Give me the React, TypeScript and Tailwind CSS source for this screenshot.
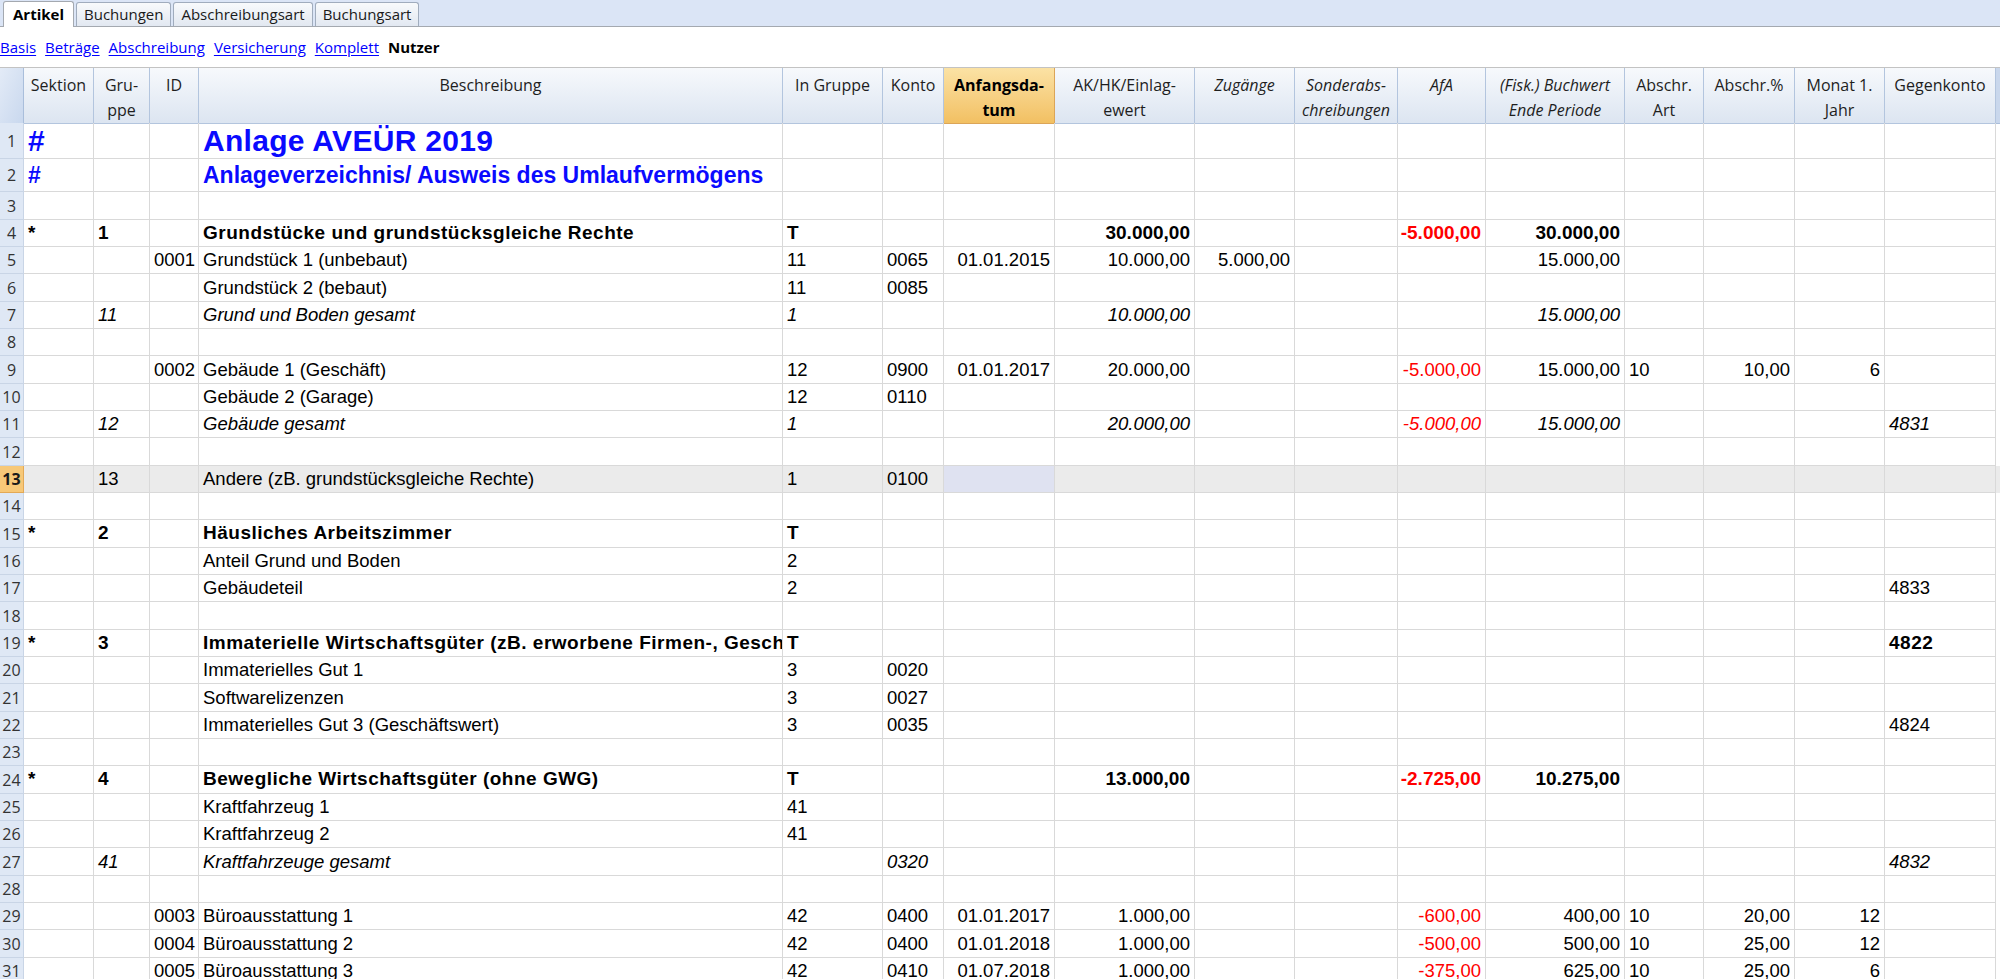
import React from 'react';

type Key =
  | 'sek'
  | 'grp'
  | 'id'
  | 'desc'
  | 'ingrp'
  | 'konto'
  | 'datum'
  | 'akhk'
  | 'zug'
  | 'sonder'
  | 'afa'
  | 'buch'
  | 'art'
  | 'pct'
  | 'monat'
  | 'gegen';

type Kind = 'title1' | 'title2' | 'bold' | 'italic' | 'plain';

interface RowData {
  n: number;
  kind?: Kind;
  selected?: boolean;
  c?: Partial<Record<Key, string>>;
}

const keys: Key[] = ['sek', 'grp', 'id', 'desc', 'ingrp', 'konto', 'datum', 'akhk', 'zug', 'sonder', 'afa', 'buch', 'art', 'pct', 'monat', 'gegen'];

const rightAligned: Key[] = ['datum', 'akhk', 'zug', 'sonder', 'afa', 'buch', 'pct', 'monat'];

const GRID =
  'grid grid-cols-[24px_70px_56px_49px_584px_100px_61px_111px_140px_100px_103px_88px_139px_79px_91px_90px_111px_1fr]';

const headers: Array<{label: React.ReactNode; italic?: boolean; active?: boolean}> = [
  {label: 'Sektion'},
  {label: <>Gru-<br />ppe</>},
  {label: 'ID'},
  {label: 'Beschreibung'},
  {label: 'In Gruppe'},
  {label: 'Konto'},
  {label: <>Anfangsda-<br />tum</>, active: true},
  {label: <>AK/HK/Einlag-<br />ewert</>},
  {label: 'Zugänge', italic: true},
  {label: <>Sonderabs-<br />chreibungen</>, italic: true},
  {label: 'AfA', italic: true},
  {label: <>(Fisk.) Buchwert<br />Ende Periode</>, italic: true},
  {label: <>Abschr.<br />Art</>},
  {label: 'Abschr.%'},
  {label: <>Monat 1.<br />Jahr</>},
  {label: 'Gegenkonto'},
];

const rows: RowData[] = [
  {n: 1, kind: 'title1', c: {sek: '#', desc: 'Anlage AVEÜR 2019'}},
  {n: 2, kind: 'title2', c: {sek: '#', desc: 'Anlageverzeichnis/ Ausweis des Umlaufvermögens'}},
  {n: 3},
  {n: 4, kind: 'bold', c: {sek: '*', grp: '1', desc: 'Grundstücke und grundstücksgleiche Rechte', ingrp: 'T', akhk: '30.000,00', afa: '-5.000,00', buch: '30.000,00'}},
  {n: 5, c: {id: '0001', desc: 'Grundstück 1 (unbebaut)', ingrp: '11', konto: '0065', datum: '01.01.2015', akhk: '10.000,00', zug: '5.000,00', buch: '15.000,00'}},
  {n: 6, c: {desc: 'Grundstück 2 (bebaut)', ingrp: '11', konto: '0085'}},
  {n: 7, kind: 'italic', c: {grp: '11', desc: 'Grund und Boden gesamt', ingrp: '1', akhk: '10.000,00', buch: '15.000,00'}},
  {n: 8},
  {n: 9, c: {id: '0002', desc: 'Gebäude 1 (Geschäft)', ingrp: '12', konto: '0900', datum: '01.01.2017', akhk: '20.000,00', afa: '-5.000,00', buch: '15.000,00', art: '10', pct: '10,00', monat: '6'}},
  {n: 10, c: {desc: 'Gebäude 2 (Garage)', ingrp: '12', konto: '0110'}},
  {n: 11, kind: 'italic', c: {grp: '12', desc: 'Gebäude gesamt', ingrp: '1', akhk: '20.000,00', afa: '-5.000,00', buch: '15.000,00', gegen: '4831'}},
  {n: 12},
  {n: 13, selected: true, c: {grp: '13', desc: 'Andere (zB. grundstücksgleiche Rechte)', ingrp: '1', konto: '0100'}},
  {n: 14},
  {n: 15, kind: 'bold', c: {sek: '*', grp: '2', desc: 'Häusliches Arbeitszimmer', ingrp: 'T'}},
  {n: 16, c: {desc: 'Anteil Grund und Boden', ingrp: '2'}},
  {n: 17, c: {desc: 'Gebäudeteil', ingrp: '2', gegen: '4833'}},
  {n: 18},
  {n: 19, kind: 'bold', c: {sek: '*', grp: '3', desc: 'Immaterielle Wirtschaftsgüter (zB. erworbene Firmen-, Geschäftswerte)', ingrp: 'T', gegen: '4822'}},
  {n: 20, c: {desc: 'Immaterielles Gut 1', ingrp: '3', konto: '0020'}},
  {n: 21, c: {desc: 'Softwarelizenzen', ingrp: '3', konto: '0027'}},
  {n: 22, c: {desc: 'Immaterielles Gut 3 (Geschäftswert)', ingrp: '3', konto: '0035', gegen: '4824'}},
  {n: 23},
  {n: 24, kind: 'bold', c: {sek: '*', grp: '4', desc: 'Bewegliche Wirtschaftsgüter (ohne GWG)', ingrp: 'T', akhk: '13.000,00', afa: '-2.725,00', buch: '10.275,00'}},
  {n: 25, c: {desc: 'Kraftfahrzeug 1', ingrp: '41'}},
  {n: 26, c: {desc: 'Kraftfahrzeug 2', ingrp: '41'}},
  {n: 27, kind: 'italic', c: {grp: '41', desc: 'Kraftfahrzeuge gesamt', konto: '0320', gegen: '4832'}},
  {n: 28},
  {n: 29, c: {id: '0003', desc: 'Büroausstattung 1', ingrp: '42', konto: '0400', datum: '01.01.2017', akhk: '1.000,00', afa: '-600,00', buch: '400,00', art: '10', pct: '20,00', monat: '12'}},
  {n: 30, c: {id: '0004', desc: 'Büroausstattung 2', ingrp: '42', konto: '0400', datum: '01.01.2018', akhk: '1.000,00', afa: '-500,00', buch: '500,00', art: '10', pct: '25,00', monat: '12'}},
  {n: 31, c: {id: '0005', desc: 'Büroausstattung 3', ingrp: '42', konto: '0410', datum: '01.07.2018', akhk: '1.000,00', afa: '-375,00', buch: '625,00', art: '10', pct: '25,00', monat: '6'}},
];

const tabs = ['Artikel', 'Buchungen', 'Abschreibungsart', 'Buchungsart'];
const views = ['Basis', 'Beträge', 'Abschreibung', 'Versicherung', 'Komplett'];

function rowHeight(n: number) {
  if (n === 1) return 'h-[36px]';
  if (n === 2) return 'h-[33px]';
  return n % 3 === 0 ? 'h-[28px]' : 'h-[27px]';
}

function kindClass(kind: Kind, numeric: boolean) {
  switch (kind) {
    case 'title1':
      return 'text-[30px] font-bold tracking-[0.3px] text-[#0a0aff]';
    case 'title2':
      return 'text-[23px] font-bold text-[#0a0aff]';
    case 'bold':
      return numeric ? 'text-[19px] font-bold' : 'text-[19px] font-bold tracking-[0.5px]';
    case 'italic':
      return 'text-[18.5px] italic';
    default:
      return 'text-[18.5px]';
  }
}

function TableRow({row}: {row: RowData}) {
  const kind = row.kind ?? 'plain';
  return (
    <div className={`${GRID} ${rowHeight(row.n)} ${row.selected ? 'bg-[#ebebeb]' : 'bg-white'}`}>
      <div
        className={`flex items-center justify-center border-r border-b font-['Open_Sans',sans-serif] text-[16px] ${
          row.selected
            ? 'bg-[#f7c878] border-[#e3a956] font-bold text-[#1a1a1a]'
            : 'bg-[#dfe8f5] border-[#c9d5e6] text-[#333]'
        }`}
      >
        {row.n}
      </div>
      {keys.map((k) => {
        const v = row.c?.[k];
        const right = rightAligned.includes(k);
        const red = k === 'afa';
        const sel = row.selected && k === 'datum';
        return (
          <div
            key={k}
            className={`flex items-center overflow-hidden whitespace-nowrap border-r border-b border-[#d9d9d9] font-['Liberation_Sans',Arial,sans-serif] ${kindClass(
              kind,
              right,
            )} ${right ? 'justify-end pl-[1px] pr-[4px]' : 'justify-start pl-[4px] pr-[1px]'} ${
              red ? 'text-[#ff0000]' : ''
            } ${kind !== 'title1' && kind !== 'title2' && !red ? 'text-black' : ''} ${sel ? 'bg-[#dfe2f1]' : ''}`}
          >
            {v}
          </div>
        );
      })}
      <div className="border-b border-transparent" />
    </div>
  );
}

export default function App() {
  return (
    <div className="h-[979px] w-[2000px] overflow-hidden bg-white font-['Open_Sans',sans-serif] text-[#1a1a1a]">
      {/* tab strip */}
      <div className="flex h-[27px] items-end gap-[2px] border-b border-[#a4a9b0] bg-[#dbe5f6] pl-[3px]">
        {tabs.map((t, i) =>
          i === 0 ? (
            <div
              key={t}
              className="-mb-px flex h-[26px] items-center rounded-t-[3px] border border-b-0 border-[#a4a9b0] bg-white px-[9px] text-[15px] font-bold text-black"
            >
              {t}
            </div>
          ) : (
            <div
              key={t}
              className="flex h-[24px] items-center rounded-t-[3px] border border-b-0 border-[#a0acbd] bg-gradient-to-b from-[#f8fafc] to-[#e2e8f1] px-[7px] text-[15px] text-[#1a1a1a]"
            >
              {t}
            </div>
          ),
        )}
      </div>

      {/* view links */}
      <div className="flex h-[40px] items-center gap-[9px] text-[15px]">
        {views.map((v) => (
          <span key={v} className="text-[#0000ff] underline underline-offset-2">
            {v}
          </span>
        ))}
        <span className="font-bold text-black">Nutzer</span>
      </div>

      {/* header */}
      <div className={`${GRID} h-[56px] border-t border-[#c3c3c3]`}>
        <div className="border-r border-b border-[#a9bedb] bg-gradient-to-br from-[#e3ebf7] to-[#c9d8ee]" />
        {headers.map((h, i) => (
          <div
            key={i}
            className={`border-r border-b pt-[5px] text-center text-[16px] leading-[25px] whitespace-nowrap ${
              h.active
                ? 'border-[#dba558] bg-gradient-to-b from-[#fbe2a4] to-[#f2c062] font-bold text-black'
                : 'border-[#b3c5de] bg-gradient-to-b from-[#f7f9fc] to-[#dce5f1] text-[#1e1e1e]'
            } ${h.italic ? 'italic' : ''}`}
          >
            {h.label}
          </div>
        ))}
        <div className="border-b border-[#a9bedb] bg-[#c9d7ec]" />
      </div>

      {/* body */}
      <div>
        {rows.map((r) => (
          <TableRow key={r.n} row={r} />
        ))}
      </div>
    </div>
  );
}
